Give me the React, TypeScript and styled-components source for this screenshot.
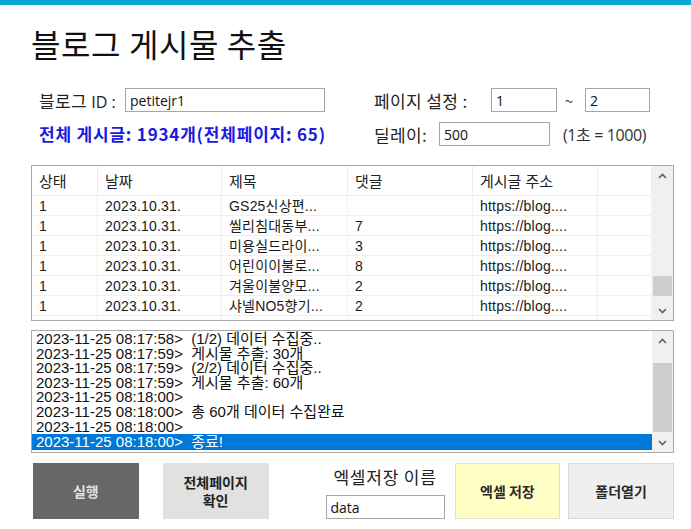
import styled, { createGlobalStyle } from 'styled-components';

const GlobalStyle = createGlobalStyle`
  html, body {
    margin: 0;
    padding: 0;
    background: #ffffff;
  }
  body {
    font-family: "Noto Sans CJK KR", "Noto Sans", sans-serif;
  }
`;

const uiFont = `"Noto Sans CJK KR", "Noto Sans", sans-serif`;
const listFont = `"Liberation Sans", "Noto Sans CJK KR", sans-serif`;

const columns = [
    { title: '상태', width: 66 },
    { title: '날짜', width: 124 },
    { title: '제목', width: 126 },
    { title: '댓글', width: 125 },
    { title: '게시글 주소', width: 125 },
    { title: '', width: 54 },
];

const posts = [
    ['1', '2023.10.31.', 'GS25신상편...', '', 'https://blog....'],
    ['1', '2023.10.31.', '씰리침대동부...', '7', 'https://blog....'],
    ['1', '2023.10.31.', '미용실드라이...', '3', 'https://blog....'],
    ['1', '2023.10.31.', '어린이이불로...', '8', 'https://blog....'],
    ['1', '2023.10.31.', '겨울이불양모...', '2', 'https://blog....'],
    ['1', '2023.10.31.', '샤넬NO5향기...', '2', 'https://blog....'],
    ['', '', '', '', ''],
];

const logLines = [
    '2023-11-25 08:17:58>  (1/2) 데이터 수집중..',
    '2023-11-25 08:17:59>  게시물 추출: 30개',
    '2023-11-25 08:17:59>  (2/2) 데이터 수집중..',
    '2023-11-25 08:17:59>  게시물 추출: 60개',
    '2023-11-25 08:18:00>',
    '2023-11-25 08:18:00>  총 60개 데이터 수집완료',
    '2023-11-25 08:18:00>',
    '2023-11-25 08:18:00>  종료!',
];

const Chevron = ({ up }: { up?: boolean }) => (
    <svg width="9" height="6" viewBox="0 0 9 6">
        <path
            d={up ? 'M1 5 L4.5 1.5 L8 5' : 'M1 1 L4.5 4.5 L8 1'}
            fill="none"
            stroke="#606060"
            strokeWidth="1.6"
        />
    </svg>
);

const Scrollbar = ({ thumbTop, thumbHeight }: { thumbTop: number; thumbHeight: number }) => (
    <ScrollTrack>
        <ArrowBox><Chevron up/></ArrowBox>
        <ThumbLane>
            <Thumb style={{ marginTop: thumbTop, height: thumbHeight }}/>
        </ThumbLane>
        <ArrowBox><Chevron/></ArrowBox>
    </ScrollTrack>
);

const App = () => {
    return (
        <>
            <GlobalStyle/>
            <Window>
                <TopBar/>
                <Body>
                    <Title>블로그 게시물 추출</Title>

                    <Form>
                        <FormColumn>
                            <FieldRow>
                                <Label $width={86}>블로그 <Latin>ID :</Latin></Label>
                                <TextBox $width={200} defaultValue="petitejr1"/>
                            </FieldRow>
                            <Summary>전체 게시글: 1934개(전체페이지: 65)</Summary>
                        </FormColumn>
                        <FormColumn>
                            <FieldRow>
                                <Label $width={117}>페이지 설정 :</Label>
                                <TextBox $width={66} defaultValue="1"/>
                                <Tilde>~</Tilde>
                                <TextBox $width={65} defaultValue="2"/>
                            </FieldRow>
                            <FieldRow>
                                <Label $width={65}>딜레이:</Label>
                                <TextBox $width={111} defaultValue="500"/>
                                <Note>(1초 = 1000)</Note>
                            </FieldRow>
                        </FormColumn>
                    </Form>

                    <ListView>
                        <GridArea>
                            <HeaderRow>
                                {columns.map((c, i) => (
                                    <HeaderCell key={i} $width={c.width}>{c.title}</HeaderCell>
                                ))}
                            </HeaderRow>
                            {posts.map((row, r) => (
                                <Row key={r}>
                                    {columns.map((c, i) => (
                                        <Cell key={i} $width={c.width}>{row[i] ?? ''}</Cell>
                                    ))}
                                </Row>
                            ))}
                        </GridArea>
                        <Scrollbar thumbTop={91} thumbHeight={20}/>
                    </ListView>

                    <LogBox>
                        <LogLines>
                            {logLines.map((line, i) => (
                                <LogLine key={i} $selected={i === logLines.length - 1}>{line}</LogLine>
                            ))}
                        </LogLines>
                        <Scrollbar thumbTop={13} thumbHeight={69}/>
                    </LogBox>

                    <Actions>
                        <ActionButton $tone="dark">실행</ActionButton>
                        <ActionButton $tone="grey">전체페이지<br/>확인</ActionButton>
                        <SaveName>
                            <SaveLabel>엑셀저장 이름</SaveLabel>
                            <TextBox $width={120} defaultValue="data"/>
                        </SaveName>
                        <ActionButton $tone="yellow">엑셀 저장</ActionButton>
                        <ActionButton $tone="light">폴더열기</ActionButton>
                    </Actions>
                </Body>
            </Window>
        </>
    );
};

const Window = styled.div`
  width: 691px;
  height: 529px;
  overflow: hidden;
  background: #ffffff;
  display: flex;
  flex-direction: column;
`;

const TopBar = styled.div`
  height: 5px;
  background: #06a8d6;
  flex-shrink: 0;
`;

const Body = styled.div`
  padding: 0 17px 0 31px;
  display: flex;
  flex-direction: column;
`;

const Title = styled.h1`
  margin: 20px 0 0 0;
  font-family: ${uiFont};
  font-size: 32px;
  font-weight: 400;
  letter-spacing: 0.6px;
  line-height: 36px;
  color: #111;
`;

const Form = styled.div`
  display: grid;
  grid-template-columns: 335px 1fr;
  margin: 27px 0 0 8px;
`;

const FormColumn = styled.div`
  display: flex;
  flex-direction: column;
  gap: 10px;
`;

const FieldRow = styled.div`
  display: flex;
  align-items: center;
  height: 24px;
`;

const Label = styled.span<{ $width: number }>`
  width: ${p => p.$width}px;
  flex-shrink: 0;
  font-family: ${uiFont};
  font-size: 17px;
  letter-spacing: 0.4px;
  color: #222;
  white-space: pre;
`;

const Latin = styled.span`
  font-family: "Open Sans", ${uiFont};
  font-size: 16px;
  letter-spacing: 0;
`;

const TextBox = styled.input<{ $width: number }>`
  box-sizing: border-box;
  width: ${p => p.$width}px;
  height: 24px;
  margin: 0;
  padding: 0 4px;
  border: 1px solid #a6a6a6;
  border-radius: 0;
  outline: none;
  font-family: "Open Sans", ${uiFont};
  font-size: 14px;
  color: #111;
  background: #fff;
`;

const Tilde = styled.span`
  width: 28px;
  padding-right: 4px;
  box-sizing: border-box;
  text-align: center;
  font-family: ${uiFont};
  font-size: 15px;
  color: #333;
`;

const Note = styled.span`
  font-family: "Open Sans", ${uiFont};
  font-size: 16px;
  color: #333;
  margin-left: 13px;
  letter-spacing: -0.4px;
`;

const Summary = styled.div`
  height: 24px;
  line-height: 24px;
  font-family: ${uiFont};
  font-size: 17px;
  font-weight: 700;
  letter-spacing: 0.8px;
  color: #1a1ae0;
  white-space: nowrap;
`;

const ListView = styled.div`
  margin-top: 19px;
  height: 156px;
  box-sizing: border-box;
  border: 1px solid #a9a9a9;
  display: flex;
  overflow: hidden;
`;

const GridArea = styled.div`
  flex: 1;
  overflow: hidden;
`;

const HeaderRow = styled.div`
  display: flex;
  height: 29px;
`;

const HeaderCell = styled.div<{ $width: number }>`
  width: ${p => p.$width}px;
  flex-shrink: 0;
  box-sizing: border-box;
  padding: 5px 0 0 7px;
  border-right: 1px solid #ededed;
  font-family: ${listFont};
  font-size: 15px;
  line-height: 22px;
  color: #222;
`;

const Row = styled.div`
  display: flex;
  height: 20px;
  border-top: 1px solid #efefef;
  box-sizing: border-box;
`;

const Cell = styled.div<{ $width: number }>`
  width: ${p => p.$width}px;
  flex-shrink: 0;
  box-sizing: border-box;
  padding: 1px 0 0 7px;
  border-right: 1px solid #f1f1f1;
  font-family: ${listFont};
  font-size: 14px;
  letter-spacing: 0.2px;
  line-height: 18px;
  color: #1a1a1a;
  white-space: nowrap;
  overflow: hidden;
`;

const ScrollTrack = styled.div`
  width: 21px;
  flex-shrink: 0;
  background: #f0f0f0;
  display: flex;
  flex-direction: column;
`;

const ArrowBox = styled.div`
  height: 19px;
  display: flex;
  align-items: center;
  justify-content: center;
  flex-shrink: 0;
`;

const ThumbLane = styled.div`
  flex: 1;
  display: flex;
  flex-direction: column;
  padding: 0 1px;
`;

const Thumb = styled.div`
  background: #cdcdcd;
`;

const LogBox = styled.div`
  margin-top: 9px;
  height: 123px;
  box-sizing: border-box;
  border: 1px solid #a9a9a9;
  display: flex;
  overflow: hidden;
`;

const LogLines = styled.div`
  flex: 1;
  padding-top: 1px;
  overflow: hidden;
`;

const LogLine = styled.div<{ $selected?: boolean }>`
  height: 14.6px;
  line-height: 14.6px;
  padding-left: 4px;
  font-family: ${listFont};
  font-size: 15px;
  white-space: pre;
  color: ${p => (p.$selected ? '#ffffff' : '#111')};
  background: ${p => (p.$selected ? '#0078d7' : 'transparent')};
  ${p => p.$selected && 'height: 16px; line-height: 16px;'}
`;

const Actions = styled.div`
  margin-top: 10px;
  display: flex;
  align-items: stretch;
  height: 56px;
  padding-left: 2px;
`;

const tones = {
    dark: { bg: '#676767', fg: '#e0e0e0', border: '#676767' },
    grey: { bg: '#e1e1e1', fg: '#1f1f1f', border: '#e1e1e1' },
    yellow: { bg: '#ffffc6', fg: '#2a2a2a', border: '#e2e2c8' },
    light: { bg: '#efefef', fg: '#2a2a2a', border: '#dadada' },
};

const ActionButton = styled.button<{ $tone: keyof typeof tones }>`
  width: 106px;
  box-sizing: border-box;
  background: ${p => tones[p.$tone].bg};
  color: ${p => tones[p.$tone].fg};
  border: 1px solid ${p => tones[p.$tone].border};
  border-radius: 0;
  font-family: ${uiFont};
  font-size: 14px;
  font-weight: 700;
  line-height: 18px;
  padding: 0;
  & + & {
    margin-left: 24px;
  }
  &:last-child {
    margin-left: 8px;
  }
`;

const SaveName = styled.div`
  display: flex;
  flex-direction: column;
  align-items: center;
  justify-content: space-between;
  margin: 0 10px 0 57px;
  width: 119px;
  input {
    width: 119px;
  }
`;

const SaveLabel = styled.div`
  font-family: ${uiFont};
  font-size: 17px;
  letter-spacing: 0.8px;
  color: #222;
  line-height: 22px;
  margin-top: 3px;
  white-space: nowrap;
`;

export default App;
